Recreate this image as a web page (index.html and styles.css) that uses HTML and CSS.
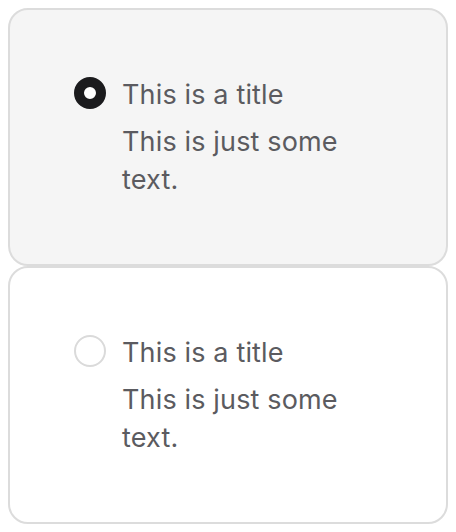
FILE: index.html
```html
<!DOCTYPE html>
<html lang="en">
<head>
<meta charset="utf-8">
<title>Radio cards</title>
<link rel="stylesheet" href="styles.css">
</head>
<body>
  <div class="list">
    <label class="card card-selected">
      <span class="radio radio-on"></span>
      <span class="content">
        <span class="title">This is a title</span>
        <span class="text">This is just some text.</span>
      </span>
    </label>
    <label class="card">
      <span class="radio"></span>
      <span class="content">
        <span class="title">This is a title</span>
        <span class="text">This is just some text.</span>
      </span>
    </label>
  </div>
</body>
</html>
```

FILE: styles.css
```css
html, body {
  margin: 0;
  padding: 0;
  background: #ffffff;
}
body {
  margin: 8px;
  font-family: Inter, "Noto Sans", sans-serif;
  color: #5b5b60;
}
.list {
  display: flex;
  flex-direction: column;
}
.card {
  display: flex;
  align-items: flex-start;
  gap: 16px;
  height: 258px;
  box-sizing: border-box;
  padding: 64px;
  border: 2px solid #dcdcdc;
  border-radius: 20px;
  background: #ffffff;
}
.card-selected {
  background: #f5f5f5;
}
.radio {
  flex: none;
  box-sizing: border-box;
  width: 32px;
  height: 32px;
  margin-top: 3px;
  border-radius: 50%;
  border: 2px solid #dadada;
  background: #ffffff;
}
.radio-on {
  border: 10px solid #1b1b1d;
}
.content {
  display: flex;
  flex-direction: column;
  gap: 9px;
  padding-top: 2px;
}
.title, .text {
  font-size: 27px;
  line-height: 38px;
  letter-spacing: 0.15px;
}
```
